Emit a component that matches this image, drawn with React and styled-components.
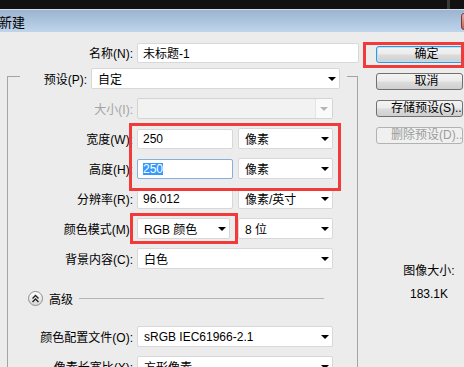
import React from 'react'
import styled, { createGlobalStyle } from 'styled-components'

const GlobalStyle = createGlobalStyle`
html, body {
    margin:0;
    padding:0;
    background:#ececec;
}
body {
    font-family:"Liberation Sans", "Noto Sans CJK SC", sans-serif;
    font-size:12px;
    color:#000;
}
`

const Screen = styled.div`
width:464px;
height:367px;
overflow:hidden;
background:#ececec;
display:flex;
flex-direction:column;
`

const TopStrip = styled.div`
height:9px;
flex-shrink:0;
background:#111;
display:flex;
span{
    margin-left:447px;
    width:3px;
    background:#3a3a3a;
}
`

const TitleBar = styled.div`
height:23px;
flex-shrink:0;
box-sizing:border-box;
border-top:1px solid #d3deea;
background:linear-gradient(#9bb4d0, #bfd5eb);
display:flex;
align-items:center;
justify-content:space-between;
overflow:hidden;
`

const Title = styled.div`
margin-left:-1px;
font-size:13px;
font-family:"Noto Sans CJK SC", sans-serif;
`

const CloseButton = styled.div`
width:40px;
height:17px;
margin-right:-37px;
box-sizing:border-box;
border:1px solid #7a3b38;
border-radius:3px;
background:linear-gradient(#eab0a8, #c55a50);
`

const Body = styled.div`
position:relative;
flex:1;
display:flex;
`

const Main = styled.div`
width:362px;
flex-shrink:0;
padding-top:10px;
`

const Side = styled.div`
padding:14px 0 0 14px;
display:flex;
flex-direction:column;
gap:10px;
`

const Row = styled.div`
display:flex;
align-items:center;
height:21px;
margin-top:${p => p.$mt || 0}px;
`

const Label = styled.span`
width:${p => p.$w}px;
padding-right:4px;
box-sizing:border-box;
text-align:right;
white-space:nowrap;
color:${p => p.$disabled ? '#a3a3a3' : '#000'};
`

const TextBox = styled.div`
width:${p => p.$w}px;
height:20px;
margin-left:${p => p.$ml || 0}px;
box-sizing:border-box;
padding-left:5px;
display:flex;
align-items:center;
background:#fff;
border:1px solid ${p => p.$focus ? '#86afdc' : '#d8d8d8'};
border-radius:2px;
`

const Selected = styled.span`
background:#3399ff;
color:#fff;
line-height:12px;
`

const Dropdown = styled.div`
width:${p => p.$w}px;
height:21px;
margin-left:${p => p.$ml || 0}px;
box-sizing:border-box;
padding:0 3px 0 6px;
display:flex;
align-items:center;
justify-content:space-between;
background:${p => p.$disabled ? '#f2f2f2' : '#fff'};
border:1px solid ${p => p.$disabled ? '#d4d4d4' : '#d8d8d8'};
border-radius:2px;
white-space:nowrap;
`

const Caret = styled.span`
width:0;
height:0;
border-left:4px solid transparent;
border-right:4px solid transparent;
border-top:4px solid ${p => p.$disabled ? '#b5b5b5' : '#000'};
`

const DisabledArrow = styled.span`
width:16px;
align-self:stretch;
display:flex;
align-items:center;
justify-content:center;
background:#fafafa;
margin-right:-3px;
border-left:1px solid #e4e4e4;
`

const Group = styled.fieldset`
margin:0 0 0 7px;
padding:0;
width:351px;
min-width:0;
box-sizing:border-box;
border:1px solid #a4a4a4;
`

const Legend = styled.legend`
margin-left:12px;
padding:5px 7px 0 0;
width:327px;
box-sizing:border-box;
display:flex;
align-items:center;
`

const Fields = styled.div`
padding-top:9px;
display:flex;
flex-direction:column;
gap:9px;
`

const Advanced = styled.div`
display:flex;
align-items:center;
height:16px;
margin-top:12px;
padding-left:20px;
margin-right:33px;
`

const Toggle = styled.div`
width:15px;
height:15px;
box-sizing:border-box;
border:1px solid #8e8e8e;
border-radius:50%;
background:linear-gradient(#ffffff, #d6d6d6);
display:flex;
align-items:center;
justify-content:center;
`

const AdvancedText = styled.span`
margin-left:6px;
`

const Rule = styled.div`
flex:1;
height:1px;
margin-left:6px;
background:#b4b4b4;
`

const Button = styled.div`
width:87px;
height:17px;
box-sizing:border-box;
padding-left:14px;
text-align:center;
line-height:15px;
white-space:nowrap;
overflow:hidden;
border:1px solid ${p => p.$primary ? '#3597d6' : p.$disabled ? '#b2b2b2' : '#707070'};
border-radius:3px;
background:${p => p.$disabled ? '#f0f0f0' : 'linear-gradient(#f4f4f4, #ebebeb 48%, #dcdcdc 52%, #cfcfcf)'};
box-shadow:${p => p.$primary ? 'inset 0 0 0 1px #b2e4fb' : 'none'};
color:${p => p.$disabled ? '#9c9c9c' : '#000'};
`

const SizeInfo = styled.div`
margin:109px 0 0 26px;
width:54px;
text-align:center;
line-height:16px;
white-space:nowrap;
div + div{
    margin-top:7px;
}
`

// red annotation boxes drawn over the dialog
const Mark = styled.div`
position:absolute;
left:${p => p.$x}px;
top:${p => p.$y}px;
width:${p => p.$w}px;
height:${p => p.$h}px;
box-sizing:border-box;
border:3px solid #f13b3b;
pointer-events:none;
`

const App = () => {
    return (
        <>
            <GlobalStyle />
            <Screen>
                <TopStrip><span /></TopStrip>
                <TitleBar>
                    <Title>新建</Title>
                    <CloseButton />
                </TitleBar>

                <Body>
                    <Main>
                        <Row>
                            <Label $w={137}>名称(N):</Label>
                            <TextBox $w={222}>未标题-1</TextBox>
                        </Row>

                        <Group>
                            <Legend>
                                <Label $w={71}>预设(P):</Label>
                                <Dropdown $w={249}>自定<Caret /></Dropdown>
                            </Legend>

                            <Fields>
                                <Row>
                                    <Label $w={129} $disabled>大小(I):</Label>
                                    <Dropdown $w={196} $disabled>
                                        <span />
                                        <DisabledArrow><Caret $disabled /></DisabledArrow>
                                    </Dropdown>
                                </Row>
                                <Row>
                                    <Label $w={129}>宽度(W):</Label>
                                    <TextBox $w={96}>250</TextBox>
                                    <Dropdown $w={95} $ml={5}>像素<Caret /></Dropdown>
                                </Row>
                                <Row>
                                    <Label $w={129}>高度(H):</Label>
                                    <TextBox $w={96} $focus><Selected>250</Selected></TextBox>
                                    <Dropdown $w={95} $ml={5}>像素<Caret /></Dropdown>
                                </Row>
                                <Row>
                                    <Label $w={129}>分辨率(R):</Label>
                                    <TextBox $w={96}>96.012</TextBox>
                                    <Dropdown $w={95} $ml={5}>像素/英寸<Caret /></Dropdown>
                                </Row>
                                <Row>
                                    <Label $w={129}>颜色模式(M):</Label>
                                    <Dropdown $w={93}>RGB 颜色<Caret /></Dropdown>
                                    <Dropdown $w={95} $ml={8}>8 位<Caret /></Dropdown>
                                </Row>
                                <Row>
                                    <Label $w={129}>背景内容(C):</Label>
                                    <Dropdown $w={196}>白色<Caret /></Dropdown>
                                </Row>

                                <Advanced>
                                    <Toggle>
                                        <svg width="9" height="9" viewBox="0 0 9 9">
                                            <path d="M1.5 4.5 L4.5 1.5 L7.5 4.5 M1.5 8 L4.5 5 L7.5 8" fill="none" stroke="#222" strokeWidth="1.4" />
                                        </svg>
                                    </Toggle>
                                    <AdvancedText>高级</AdvancedText>
                                    <Rule />
                                </Advanced>

                                <Row $mt={11}>
                                    <Label $w={129}>颜色配置文件(O):</Label>
                                    <Dropdown $w={196}>sRGB IEC61966-2.1<Caret /></Dropdown>
                                </Row>
                                <Row>
                                    <Label $w={129}>像素长宽比(X):</Label>
                                    <Dropdown $w={196}>方形像素<Caret /></Dropdown>
                                </Row>
                            </Fields>
                        </Group>
                    </Main>

                    <Side>
                        <Button $primary>确定</Button>
                        <Button>取消</Button>
                        <Button>存储预设(S)...</Button>
                        <Button $disabled>删除预设(D)...</Button>

                        <SizeInfo>
                            <div>图像大小:</div>
                            <div>183.1K</div>
                        </SizeInfo>
                    </Side>

                    <Mark $x={363} $y={10} $w={101} $h={26} />
                    <Mark $x={129} $y={91} $w={212} $h={68} />
                    <Mark $x={130} $y={181} $w={108} $h={31} />
                </Body>
            </Screen>
        </>
    )
}

export default App
